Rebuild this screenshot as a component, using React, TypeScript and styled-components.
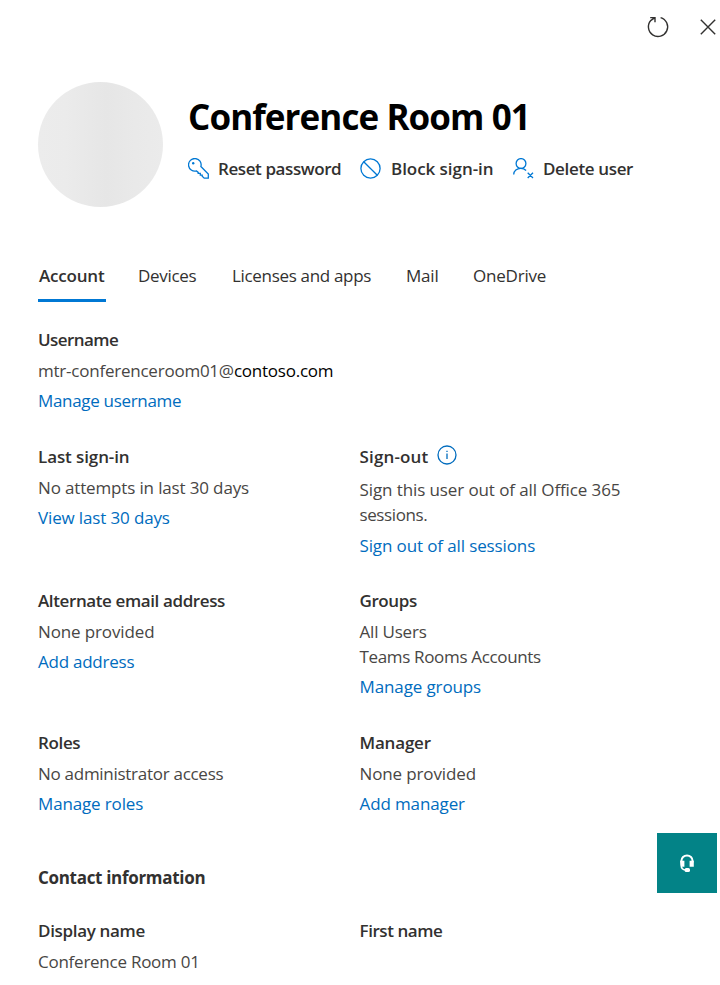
import React from "react";
import styled, { createGlobalStyle } from "styled-components";

const Global = createGlobalStyle`
  * { box-sizing: border-box; }
  html, body { margin: 0; background: #fff; }
  body { width: 720px; height: 985px; overflow: hidden; }
  button { border: 0; padding: 0; background: none; font: inherit; color: inherit; cursor: pointer; }
`;

const Panel = styled.main`
  width: 720px;
  height: 985px;
  overflow: hidden;
  color: #323130;
  font: 400 17px/25px "Open Sans", "Noto Sans", sans-serif;
`;

const TopBar = styled.div`
  display: flex;
  justify-content: flex-end;
  gap: 26px;
  height: 82px;
  padding: 15px 0 0;
`;

const IconButton = styled.button`
  display: flex;
  width: 24px;
  height: 24px;
`;

const Header = styled.header`
  display: flex;
  gap: 25px;
  height: 180px;
  padding-left: 38px;
`;

const Avatar = styled.div`
  width: 125px;
  height: 125px;
  border-radius: 50%;
  background: linear-gradient(90deg, #ececec 0%, #ebebeb 22%, #e6e6e6 55%, #e9e9e9 78%, #ebebeb 100%);
`;

const Track = styled.span<{ $track?: number }>`
  letter-spacing: ${(p) => p.$track ?? -0.2}px;
  white-space: nowrap;
`;

const Title = styled.h1`
  margin: 10px 0 0;
  color: #000;
  font-size: 35px;
  line-height: 50px;
  font-weight: 700;
`;

const Actions = styled.div`
  display: flex;
  margin-top: 14px;
`;

const Action = styled.button<{ $width: number; $gap?: number }>`
  display: flex;
  align-items: center;
  gap: ${(p) => p.$gap ?? 9}px;
  width: ${(p) => p.$width}px;
  height: 25px;
  font-weight: 600;
  svg { flex: none; }
`;

const Tabs = styled.nav`
  display: flex;
  height: 65px;
  padding-left: 38px;
`;

const Tab = styled.button<{ $width: number; $gap: number; $active?: boolean }>`
  width: ${(p) => p.$width}px;
  height: 40px;
  margin-right: ${(p) => p.$gap}px;
  padding: 1px 0 11px 1px;
  border-bottom: 3px solid ${(p) => (p.$active ? "#0078d4" : "transparent")};
  font-weight: ${(p) => (p.$active ? 600 : 400)};
  text-align: left;
`;

const Row = styled.section<{ $height: number }>`
  display: grid;
  grid-template-columns: 321.5px 330px;
  height: ${(p) => p.$height}px;
  padding-left: 38px;
`;

const Label = styled.div`
  display: flex;
  gap: 9px;
  height: 25px;
  margin-bottom: 6px;
  font-weight: 600;
  svg { margin-top: 1px; }
`;

const Value = styled.div<{ $top?: number }>`
  margin-top: ${(p) => p.$top ?? 0}px;
  color: #484644;
  b { color: #000; font-weight: 400; }
`;

const Link = styled.a<{ $top?: number }>`
  display: block;
  margin-top: ${(p) => p.$top ?? 5}px;
  color: #006cbe;
`;

const SectionTitle = styled.h2`
  height: 53px;
  margin: 0;
  padding-left: 38px;
  font-size: 17px;
  line-height: 25px;
  font-weight: 700;
`;

const HelpButton = styled.button`
  position: fixed;
  left: 657px;
  top: 833px;
  display: flex;
  align-items: center;
  justify-content: center;
  width: 60px;
  height: 60px;
  background: #038387;
`;

const RefreshIcon = () => (
  <svg width="24" height="24" viewBox="0 0 24 24" fill="none" stroke="#323130" strokeWidth="1.4">
    <path d="M14.6 2.6A9.6 9.6 0 1 1 5 5.3L8.9 2.6M4.2 2.6H9V7.2" />
  </svg>
);

const CloseIcon = () => (
  <svg width="24" height="24" viewBox="0 0 24 24" fill="none" stroke="#323130" strokeWidth="1.4">
    <path d="M4.8 4.8 19.2 19.2M19.2 4.8 4.8 19.2" />
  </svg>
);

const KeyIcon = () => (
  <svg width="21" height="21" viewBox="0 0 21 21" fill="none" stroke="#0078d4" strokeWidth="1.3">
    <path d="M12.9 8.5A6.3 6.3 0 1 0 8.5 12.9L10.2 14.4V15.3H12.3V17.1H14.2V18.2L16.2 20.1H20.3V16.1Z" />
    <circle cx="5.2" cy="5.2" r="1.2" fill="#0078d4" stroke="none" />
  </svg>
);

const BlockIcon = () => (
  <svg width="21" height="21" viewBox="0 0 21 21" fill="none" stroke="#0078d4" strokeWidth="1.3">
    <circle cx="10.5" cy="10.5" r="9.6" />
    <path d="M3.7 3.7 17.3 17.3" />
  </svg>
);

const DeleteUserIcon = () => (
  <svg width="21" height="21" viewBox="0 0 21 21" fill="none" stroke="#0078d4" strokeWidth="1.3">
    <circle cx="8" cy="5.5" r="4.9" />
    <path d="M.7 16.5C.7 12.8 4 10.4 7.7 10.4C9.8 10.4 11.8 11.2 13.1 12.5M14.7 14.7 20 20M20 14.7 14.7 20" />
  </svg>
);

const InfoIcon = () => (
  <svg width="20" height="20" viewBox="0 0 20 20" fill="none" stroke="#006cbe" strokeWidth="1.3">
    <circle cx="10" cy="10" r="9" />
    <path d="M10 8.4V14M10 5.7V7.1" />
  </svg>
);

const HeadsetIcon = () => (
  <svg width="16" height="20" viewBox="0 0 16 20" fill="none" stroke="#fff">
    <path d="M2.4 9.5V8A5.6 5.6 0 0 1 13.6 8V9.5" strokeWidth="2" />
    <path d="M1.2 7.8H5.4V13.8H3.6Q1.2 13.8 1.2 11ZM10.6 7.8H14.8V13.8H10.6Z" fill="#fff" stroke="none" />
    <path d="M2.2 12.5Q2.4 16.8 6.5 17" strokeWidth="1.6" />
    <rect x="5.6" y="15" width="5.4" height="4" rx="1.6" fill="#fff" stroke="none" />
  </svg>
);

export default function App() {
  return (
    <Panel>
      <Global />
      <TopBar>
        <IconButton aria-label="Refresh"><RefreshIcon /></IconButton>
        <IconButton aria-label="Close"><CloseIcon /></IconButton>
      </TopBar>
      <Header>
        <Avatar />
        <div>
          <Title><Track $track={-0.92}>Conference Room 01</Track></Title>
          <Actions>
            <Action $width={172}><KeyIcon /><Track $track={-0.41}>Reset password</Track></Action>
            <Action $width={153} $gap={10}><BlockIcon /><Track $track={-0.05}>Block sign-in</Track></Action>
            <Action $width={130}><DeleteUserIcon /><Track $track={-0.35}>Delete user</Track></Action>
          </Actions>
        </div>
      </Header>
      <Tabs>
        <Tab $width={68} $gap={31} $active><Track>Account</Track></Tab>
        <Tab $width={62} $gap={32}><Track $track={-0.3}>Devices</Track></Tab>
        <Tab $width={143} $gap={31}><Track $track={-0.32}>Licenses and apps</Track></Tab>
        <Tab $width={36} $gap={31}><Track>Mail</Track></Tab>
        <Tab $width={76} $gap={0}><Track>OneDrive</Track></Tab>
      </Tabs>
      <Row $height={117}>
        <div>
          <Label><Track $track={-0.57}>Username</Track></Label>
          <Value><Track $track={-0.23}>mtr-conferenceroom01@<b>contoso.com</b></Track></Value>
          <Link><Track $track={-0.32}>Manage username</Track></Link>
        </div>
      </Row>
      <Row $height={144}>
        <div>
          <Label><Track $track={-0.1}>Last sign-in</Track></Label>
          <Value><Track $track={-0.15}>No attempts in last 30 days</Track></Value>
          <Link><Track $track={-0.14}>View last 30 days</Track></Link>
        </div>
        <div>
          <Label><Track $track={0.15}>Sign-out</Track><InfoIcon /></Label>
          <Value $top={8}><Track $track={-0.1}>Sign this user out of all Office 365</Track><br /><Track $track={-0.4}>sessions.</Track></Value>
          <Link $top={6}><Track $track={-0.12}>Sign out of all sessions</Track></Link>
        </div>
      </Row>
      <Row $height={142}>
        <div>
          <Label><Track $track={-0.39}>Alternate email address</Track></Label>
          <Value><Track $track={-0.13}>None provided</Track></Value>
          <Link><Track $track={-0.24}>Add address</Track></Link>
        </div>
        <div>
          <Label><Track $track={-0.4}>Groups</Track></Label>
          <Value><Track>All Users</Track><br /><Track $track={-0.34}>Teams Rooms Accounts</Track></Value>
          <Link><Track $track={-0.12}>Manage groups</Track></Link>
        </div>
      </Row>
      <Row $height={135}>
        <div>
          <Label><Track $track={-0.35}>Roles</Track></Label>
          <Value><Track $track={-0.28}>No administrator access</Track></Value>
          <Link><Track $track={-0.15}>Manage roles</Track></Link>
        </div>
        <div>
          <Label><Track>Manager</Track></Label>
          <Value><Track $track={-0.13}>None provided</Track></Value>
          <Link><Track $track={-0.12}>Add manager</Track></Link>
        </div>
      </Row>
      <SectionTitle><Track $track={-0.31}>Contact information</Track></SectionTitle>
      <Row $height={67}>
        <div>
          <Label><Track $track={-0.33}>Display name</Track></Label>
          <Value><Track $track={-0.25}>Conference Room 01</Track></Value>
        </div>
        <div>
          <Label><Track $track={-0.43}>First name</Track></Label>
        </div>
      </Row>
      <HelpButton aria-label="Help"><HeadsetIcon /></HelpButton>
    </Panel>
  );
}
